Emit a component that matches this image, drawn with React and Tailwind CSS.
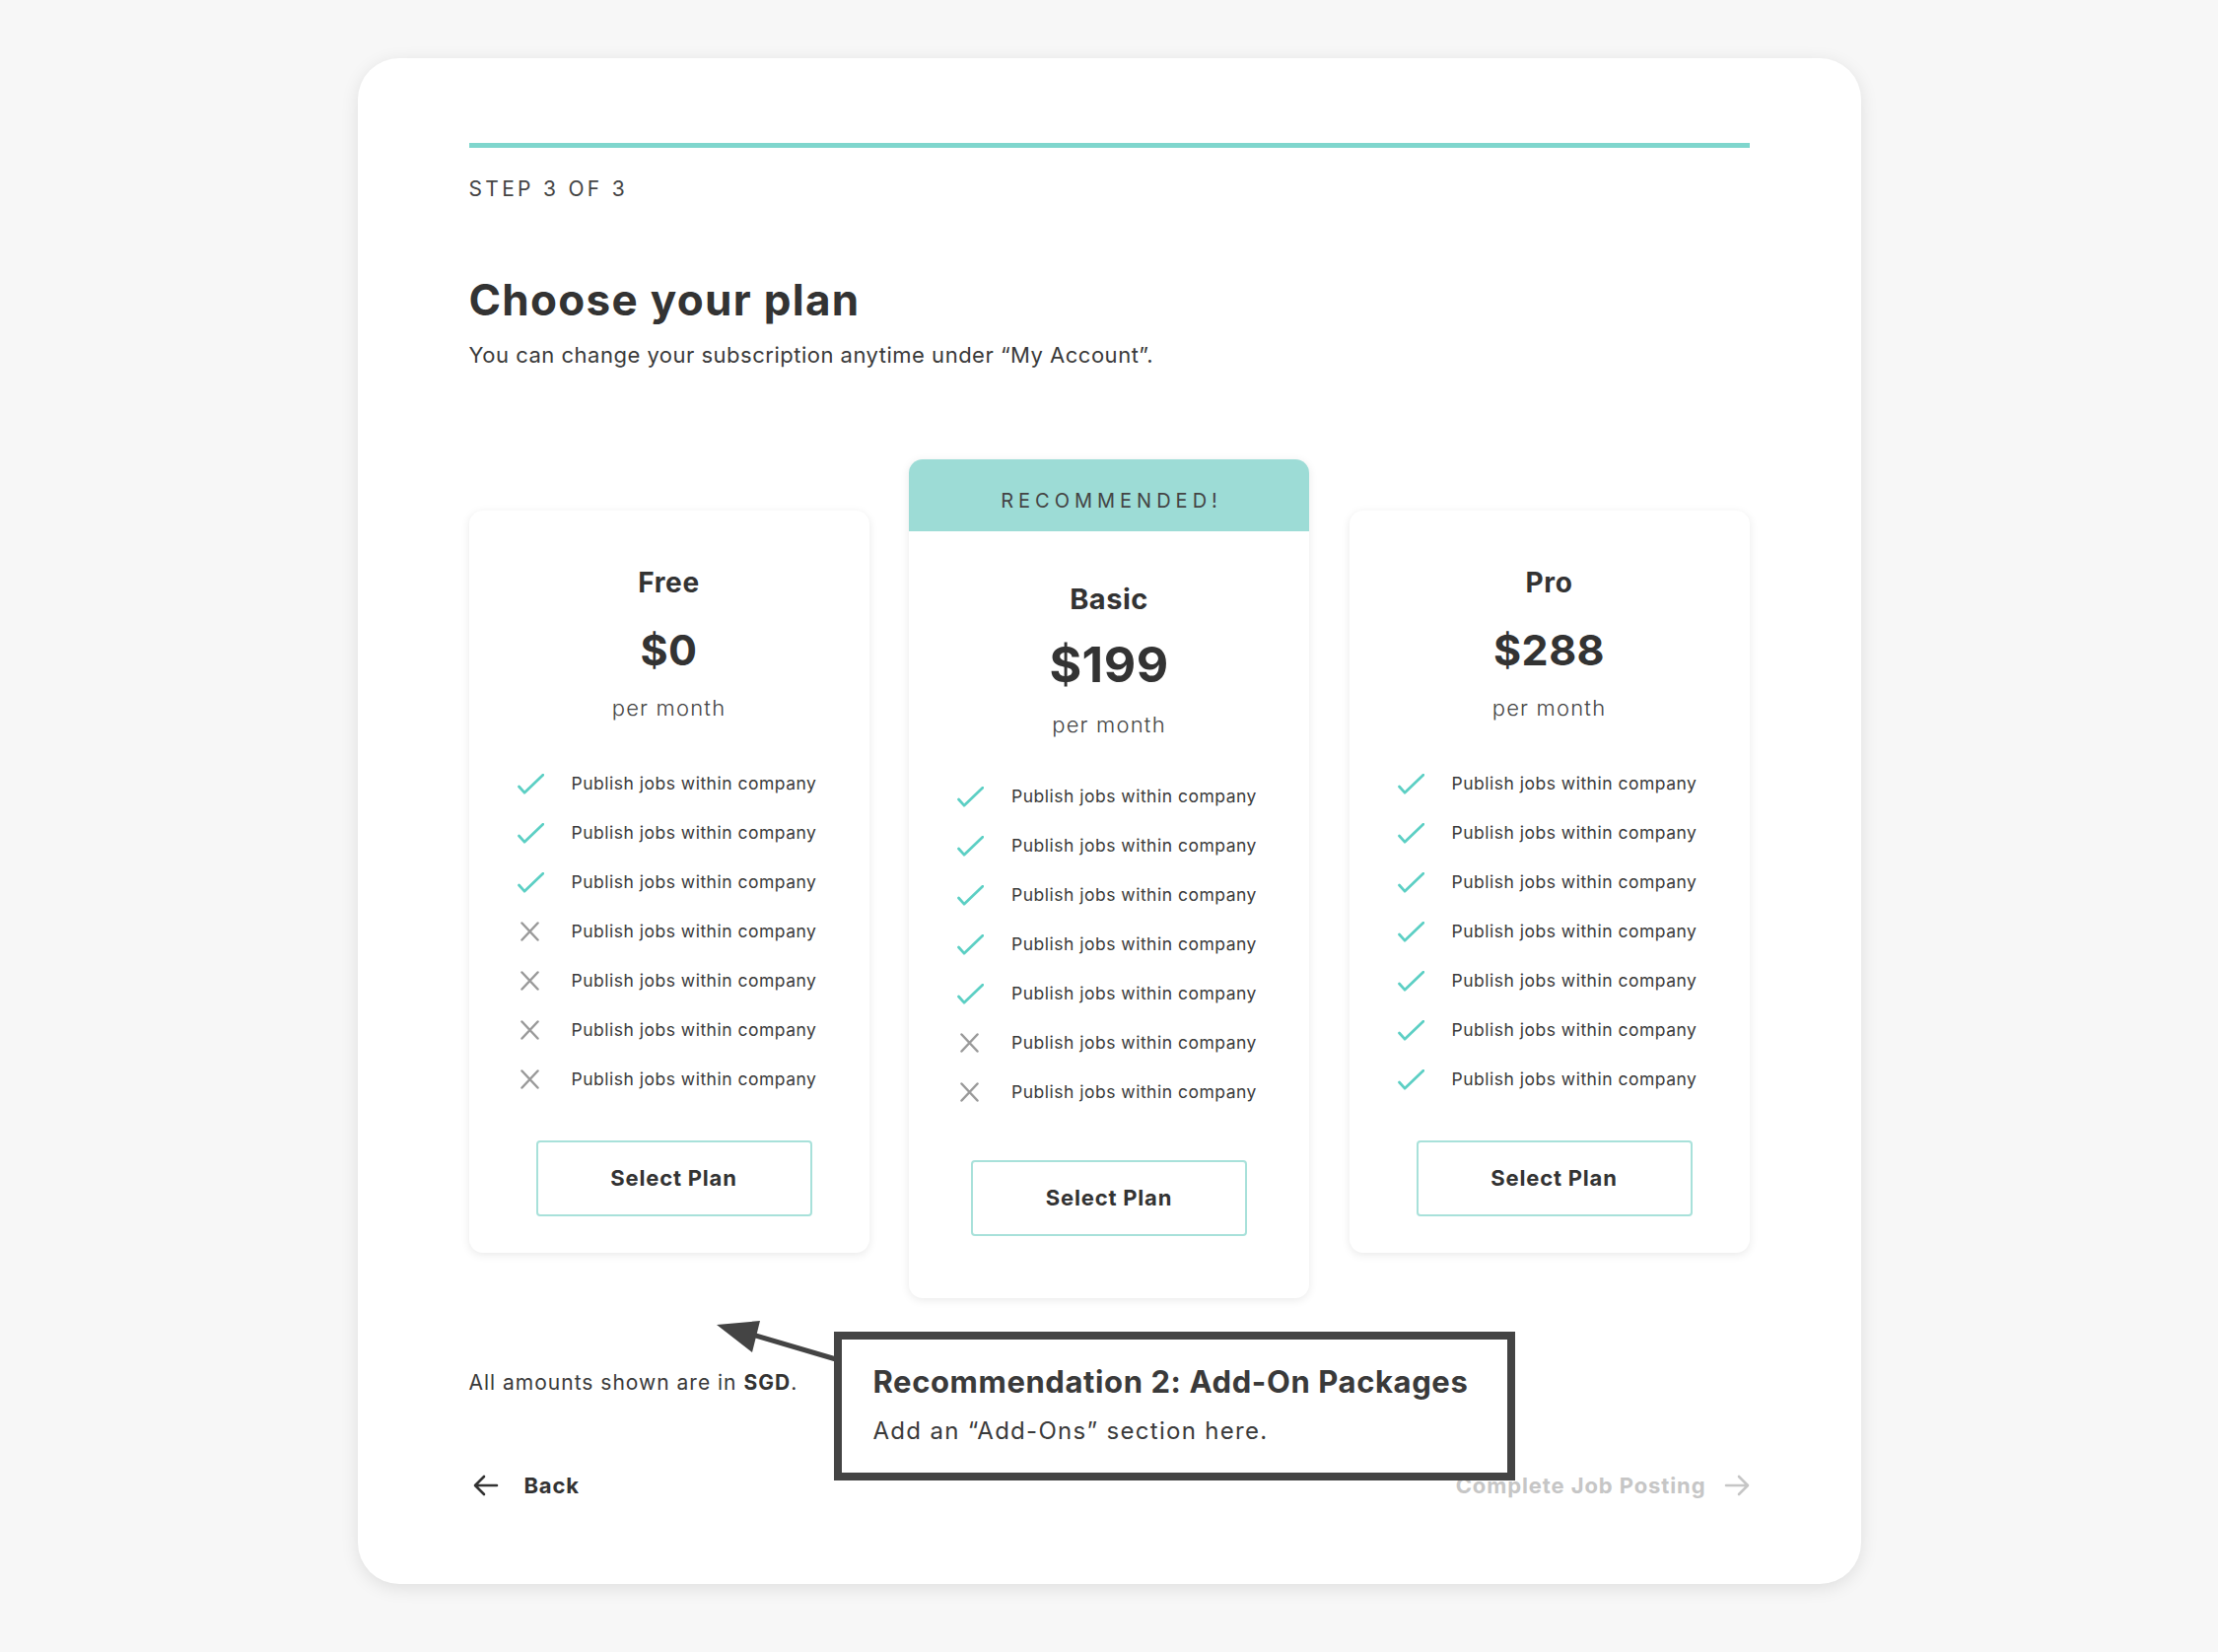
import React from "react";

const FONT = { fontFamily: "Inter, 'Noto Sans', sans-serif" };

function Check() {
  return (
    <svg width="27" height="21" viewBox="0 0 27 21" fill="none">
      <path d="M1.5 13 L7 19.2 L25.8 1.2" stroke="#5ccfc4" strokeWidth="2.7" strokeLinecap="round" strokeLinejoin="round" />
    </svg>
  );
}

function Cross() {
  return (
    <svg width="27" height="21" viewBox="0 0 27 21" fill="none">
      <path d="M4.5 1.5 L20.5 18.5 M20.5 1.5 L4.5 18.5" stroke="#9a9a9a" strokeWidth="2.5" strokeLinecap="round" />
    </svg>
  );
}

function Features({ checks, total }) {
  const rows = Array.from({ length: total }, (_, i) => i < checks);
  return (
    <ul className="flex flex-col pl-[49px] pr-[30px]">
      {rows.map((ok, i) => (
        <li key={i} className="flex h-[50px] items-center gap-[28px]">
          <span className="flex w-[27px] shrink-0 justify-center">{ok ? <Check /> : <Cross />}</span>
          <span className="text-[17.5px] tracking-[0.5px] text-[#3a3a3a] whitespace-nowrap">Publish jobs within company</span>
        </li>
      ))}
    </ul>
  );
}

function SelectButton() {
  return (
    <button className="mx-auto flex h-[77px] w-[280px] items-center justify-center rounded-[4px] border-2 border-[#a8e1da] bg-white text-[22px] font-bold tracking-[0.8px] text-[#333]">
      Select Plan
    </button>
  );
}

function SideCard({ name, price, checks }) {
  return (
    <div className="mt-[52px] w-[406px] rounded-[14px] bg-white pt-[57px] pb-[37px] shadow-[0_2px_10px_rgba(0,0,0,0.09)]">
      <div className="text-center text-[28px] font-bold leading-[32px] tracking-[0.6px] text-[#333]">{name}</div>
      <div className="mt-[28px] text-center text-[43px] font-bold leading-[48px] tracking-[0.5px] text-[#333]">{price}</div>
      <div className="mt-[21px] text-center text-[22px] font-light leading-[28px] tracking-[1.2px] text-[#444]">per month</div>
      <div className="mt-[38px]">
        <Features checks={checks} total={7} />
      </div>
      <div className="mt-[37px] pl-[10px]">
        <SelectButton />
      </div>
    </div>
  );
}

function MainCard() {
  return (
    <div className="w-[406px] overflow-hidden rounded-[14px] bg-white shadow-[0_2px_10px_rgba(0,0,0,0.09)]">
      <div className="flex h-[73px] items-center justify-center bg-[#9ddcd6] pl-[5px] pt-[10px] text-[20px] tracking-[5px] text-[#444]">
        RECOMMENDED!
      </div>
      <div className="pt-[52px] pb-[63px]">
        <div className="text-center text-[29px] font-bold leading-[34px] tracking-[0.5px] text-[#333]">Basic</div>
        <div className="mt-[23px] text-center text-[50px] font-bold leading-[52px] tracking-[0.5px] text-[#333]">$199</div>
        <div className="mt-[21px] text-center text-[22px] font-light leading-[28px] tracking-[1.2px] text-[#444]">per month</div>
        <div className="mt-[34px]">
          <Features checks={5} total={7} />
        </div>
        <div className="mt-[44px]">
          <SelectButton />
        </div>
      </div>
    </div>
  );
}

function ArrowLeftIcon() {
  return (
    <svg width="26" height="22" viewBox="0 0 26 22" fill="none">
      <path d="M24 11 H2.5 M11 2 L2 11 L11 20" stroke="#333" strokeWidth="2.6" strokeLinecap="round" strokeLinejoin="round" />
    </svg>
  );
}

function ArrowRightIcon() {
  return (
    <svg width="26" height="22" viewBox="0 0 26 22" fill="none">
      <path d="M2 11 H23.5 M15 2 L24 11 L15 20" stroke="#c6c6c6" strokeWidth="2.6" strokeLinecap="round" strokeLinejoin="round" />
    </svg>
  );
}

export default function App() {
  return (
    <div className="min-h-screen bg-[#f7f7f7] pt-[59px]" style={FONT}>
      <div className="relative mx-auto w-[1525px] rounded-[42px] bg-white px-[113px] pt-[86px] pb-[84px] shadow-[0_4px_18px_rgba(0,0,0,0.10)]">
        <div className="h-[5px] w-full bg-[#7fd6cd]" />
        <div className="mt-[28px] text-[21px] leading-[28px] tracking-[3.3px] text-[#444]">STEP 3 OF 3</div>
        <h1 className="mt-[74px] text-[44px] font-bold leading-[48px] tracking-[1.3px] text-[#333]">Choose your plan</h1>
        <p className="mt-[18px] text-[22px] leading-[28px] tracking-[0.5px] text-[#3a3a3a]">
          You can change your subscription anytime under “My Account”.
        </p>

        <div className="mt-[92px] flex items-start justify-between">
          <SideCard name="Free" price="$0" checks={3} />
          <MainCard />
          <SideCard name="Pro" price="$288" checks={7} />
        </div>

        <p className="mt-[72px] text-[21px] leading-[28px] tracking-[1px] text-[#3a3a3a]">
          All amounts shown are in <span className="font-bold text-[#333]">SGD</span>.
        </p>

        <div className="mt-[74px] flex h-[32px] items-center justify-between">
          <div className="flex items-center gap-[26px] pl-[4px]">
            <ArrowLeftIcon />
            <span className="text-[22px] font-bold tracking-[0.8px] text-[#333]">Back</span>
          </div>
          <div className="flex items-center gap-[18px]">
            <span className="text-[22px] font-bold tracking-[0.9px] text-[#c6c6c6]">Complete Job Posting</span>
            <ArrowRightIcon />
          </div>
        </div>

        {/* annotation overlay */}
        <svg className="absolute left-[358px] top-[1276px] z-10" width="130" height="54" viewBox="0 0 130 54" fill="none">
          <path d="M127 44 L22 13" stroke="#444" strokeWidth="5" />
          <path d="M6 9 L50 5 L42 37 Z" fill="#444" />
        </svg>
        <div className="absolute left-[483px] top-[1292px] z-10 h-[151px] w-[691px] border-[8px] border-[#444] bg-white pl-[32px] pt-[24px]">
          <div className="text-[31px] font-bold leading-[38px] tracking-[0.6px] text-[#3a3a3a]">Recommendation 2: Add-On Packages</div>
          <div className="mt-[16px] text-[24px] leading-[30px] tracking-[1.3px] text-[#3a3a3a]">Add an “Add-Ons” section here.</div>
        </div>
      </div>
    </div>
  );
}
